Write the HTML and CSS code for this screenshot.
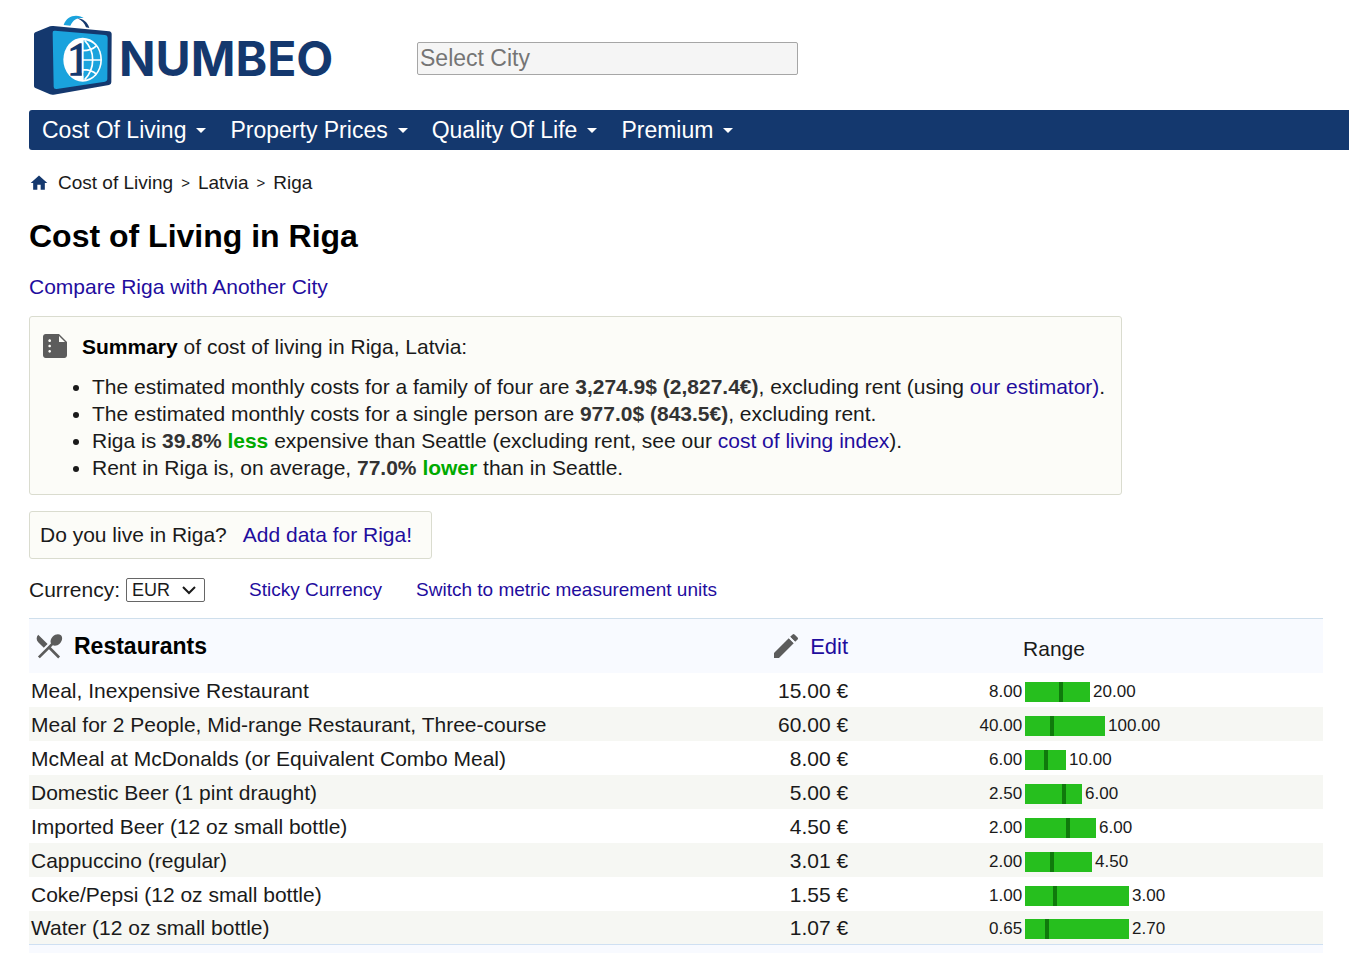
FILE: index.html
```html
<!DOCTYPE html>
<html lang="en">
<head>
  <meta charset="utf-8" />
  <title>Cost of Living in Riga</title>
  <meta name="viewport" content="width=device-width, initial-scale=1" />
  <link rel="stylesheet" href="styles.css">
</head>

<body>
  <header class="top">
    <a href="#" class="logo">
      <svg class="logo-mark" viewBox="42 30 240 240" aria-hidden="true">
        <path fill="#1aa3dd" d="M131 60C137 41 152 32 168 32C178 32 186 35 191 39C174 38 160 42 151 62Z" />
        <path fill="#14386e" d="M172 40C188 41 203 51 208 69L198 67C194 55 186 46 172 40Z" />
        <path fill="#14386e" d="M42 88Q42 84 46 82L90 64Q95 62 100 63L267 79Q275 80 275 88L274 232Q274 239 267 240L101 269Q95 270 90 268L46 249Q42 247 42 243Z" />
        <path fill="#1aa3dd" d="M98 84Q97 76 105 77L255 90Q263 91 263 98L262 223Q262 229 255 230L110 252Q101 253 101 245Z" />
        <ellipse cx="188" cy="164" rx="58" ry="66" fill="#fff" />
        <text class="logo-one" x="141" y="211">1</text>
        <path fill="#1aa3dd" d="M190 106C222 107 241 132 241 164C241 197 220 223 190 224Z" />
        <g fill="none" stroke="#fff" stroke-width="5">
          <path d="M188 165H243M188 137Q215 137 230 122M188 194Q215 194 230 208M194 106Q219 132 218 165Q218 199 194 224M188 104V226" />
        </g>
      </svg>
      <span class="logo-name">NUMBEO</span>
    </a>
    <form class="search">
      <input type="text" name="city" placeholder="Select City" aria-label="Select City" />
    </form>
  </header>

  <nav class="menu">
    <a href="#">Cost Of Living<span class="caret"></span></a>
    <a href="#">Property Prices<span class="caret"></span></a>
    <a href="#">Quality Of Life<span class="caret"></span></a>
    <a href="#">Premium<span class="caret"></span></a>
  </nav>

  <main>
    <div class="breadcrumb">
      <a href="#" aria-label="Home"><svg class="home" viewBox="0 0 24 24"><path d="M10 20v-6h4v6h5v-8h3L12 3 2 12h3v8z" /></svg></a>
      <a href="#">Cost of Living</a>
      <span class="sep">&gt;</span>
      <a href="#">Latvia</a>
      <span class="sep">&gt;</span>
      <a href="#">Riga</a>
    </div>

    <h1>Cost of Living in Riga</h1>
    <p class="compare"><a href="#">Compare Riga with Another City</a></p>

    <section class="box summary">
      <div class="summary-title">
        <svg class="icon" viewBox="0 0 24 24"><path fill-rule="evenodd" d="M15 3H5c-1.100 0-2 .9-2 2v14c0 1.100.9 2 2 2h14c1.100 0 2-.9 2-2V9l-6-6zM8 17c-.55 0-1-.45-1-1s.45-1 1-1 1 .45 1 1-.45 1-1 1zm0-4c-.55 0-1-.45-1-1s.45-1 1-1 1 .45 1 1-.45 1-1 1zm0-4c-.55 0-1-.45-1-1s.45-1 1-1 1 .45 1 1-.45 1-1 1zm7 0V4.500L19.500 9H15z" /></svg>
        <span><b>Summary</b> of cost of living in Riga, Latvia:</span>
      </div>
      <ul>
        <li>The estimated monthly costs for a family of four are <b>3,274.9$ (2,827.4€)</b>, excluding rent (using <a href="#">our estimator)</a>.</li>
        <li>The estimated monthly costs for a single person are <b>977.0$ (843.5€)</b>, excluding rent.</li>
        <li>Riga is <b>39.8% <span class="green">less</span></b> expensive than Seattle (excluding rent, see our <a href="#">cost of living index</a>).</li>
        <li>Rent in Riga is, on average, <b>77.0% <span class="green">lower</span></b> than in Seattle.</li>
      </ul>
    </section>

    <div class="box add-data">
      <span>Do you live in Riga?</span>
      <a href="#">Add data for Riga!</a>
    </div>

    <form class="currency">
      <label for="currency">Currency:</label>
      <span class="select">
        <select id="currency">
          <option>EUR</option>
          <option>USD</option>
        </select>
        <svg viewBox="0 0 16 10"><path d="M2 2l6 6 6-6" /></svg>
      </span>
      <a href="#" class="sticky">Sticky Currency</a>
      <a href="#" class="units">Switch to metric measurement units</a>
    </form>

    <table class="prices">
      <colgroup>
        <col class="col-name">
        <col class="col-price">
        <col class="col-range">
      </colgroup>
      <thead>
        <tr>
          <th class="category">
            <div>
              <svg class="icon" viewBox="0 0 24 24"><path d="M8.100 13.340l2.830-2.830L3.910 3.500c-1.560 1.560-1.560 4.090 0 5.660l4.190 4.180zm6.780-1.810c1.530.71 3.680.21 5.270-1.380 1.910-1.910 2.280-4.650.81-6.120-1.460-1.460-4.200-1.100-6.120.81-1.590 1.590-2.090 3.740-1.380 5.270L3.700 19.870l1.410 1.410L12 14.410l6.880 6.880 1.410-1.410L13.410 13l1.470-1.470z" /></svg>
              <span>Restaurants</span>
            </div>
          </th>
          <th class="edit">
            <a href="#"><svg class="icon" viewBox="0 0 24 24"><path d="M3 17.250V21h3.750L17.810 9.940l-3.750-3.750L3 17.250zM20.710 7.040a1 1 0 0 0 0-1.410l-2.340-2.340a1 1 0 0 0-1.410 0l-1.830 1.830 3.750 3.750 1.830-1.830z" /><path class="cut" d="M14.500 5.500l4.200 4.200" /></svg><span>Edit</span></a>
          </th>
          <th class="range-title">Range</th>
        </tr>
      </thead>
      <tbody>
        <tr>
          <td>Meal, Inexpensive Restaurant</td>
          <td class="price">15.00 €</td>
          <td><div class="range"><span class="low">8.00</span><span class="bar" style="width: 65px"><i style="margin-left: 34px"></i></span><span>20.00</span></div></td>
        </tr>
        <tr>
          <td>Meal for 2 People, Mid-range Restaurant, Three-course</td>
          <td class="price">60.00 €</td>
          <td><div class="range"><span class="low">40.00</span><span class="bar" style="width: 80px"><i style="margin-left: 25px"></i></span><span>100.00</span></div></td>
        </tr>
        <tr>
          <td>McMeal at McDonalds (or Equivalent Combo Meal)</td>
          <td class="price">8.00 €</td>
          <td><div class="range"><span class="low">6.00</span><span class="bar" style="width: 41px"><i style="margin-left: 19px"></i></span><span>10.00</span></div></td>
        </tr>
        <tr>
          <td>Domestic Beer (1 pint draught)</td>
          <td class="price">5.00 €</td>
          <td><div class="range"><span class="low">2.50</span><span class="bar" style="width: 57px"><i style="margin-left: 37px"></i></span><span>6.00</span></div></td>
        </tr>
        <tr>
          <td>Imported Beer (12 oz small bottle)</td>
          <td class="price">4.50 €</td>
          <td><div class="range"><span class="low">2.00</span><span class="bar" style="width: 71px"><i style="margin-left: 41px"></i></span><span>6.00</span></div></td>
        </tr>
        <tr>
          <td>Cappuccino (regular)</td>
          <td class="price">3.01 €</td>
          <td><div class="range"><span class="low">2.00</span><span class="bar" style="width: 67px"><i style="margin-left: 25px"></i></span><span>4.50</span></div></td>
        </tr>
        <tr>
          <td>Coke/Pepsi (12 oz small bottle)</td>
          <td class="price">1.55 €</td>
          <td><div class="range"><span class="low">1.00</span><span class="bar" style="width: 104px"><i style="margin-left: 28px"></i></span><span>3.00</span></div></td>
        </tr>
        <tr>
          <td>Water (12 oz small bottle)</td>
          <td class="price">1.07 €</td>
          <td><div class="range"><span class="low">0.65</span><span class="bar" style="width: 104px"><i style="margin-left: 20px"></i></span><span>2.70</span></div></td>
        </tr>
      </tbody>
    </table>
    <div class="table-end"></div>
  </main>
</body>
</html>
```
FILE: styles.css
```css
* {
  box-sizing: border-box;
}

body {
  margin: 0;
  padding-left: 29px;
  font-family: "Liberation Sans", Arial, sans-serif;
  font-size: 21px;
  line-height: 27px;
  color: #1a1a1a;
  background-color: #fff;
}

a {
  color: #1f0d9e;
  text-decoration: none;
}

a:hover {
  text-decoration: underline;
}

/* header */
.top {
  display: flex;
  align-items: center;
  height: 110px;
  padding-left: 5px;
}

.logo {
  display: flex;
  align-items: center;
  width: 383px;
  color: #14386e;
}

.logo-mark {
  width: 80px;
  height: 80px;
}

.logo-one {
  font-family: "Liberation Serif", serif;
  font-size: 138px;
  fill: #14386e;
  stroke: #14386e;
  stroke-width: 4px;
}

.logo-name {
  margin-left: 5px;
  padding-top: 8px;
  font-family: Inter, sans-serif;
  font-size: 48px;
  font-weight: 700;
  line-height: 60px;
}

.search {
  margin: 7px 0 0;
}

.search input {
  display: block;
  width: 381px;
  height: 33px;
  padding: 0 2px;
  border: 1px solid #a6a6a6;
  border-radius: 2px;
  background-color: #f5f5f5;
  font-family: inherit;
  font-size: 23px;
}

/* menu */
.menu {
  display: flex;
  height: 40px;
  background-color: #14386e;
  border-radius: 3px 0 0 3px;
}

.menu a {
  display: flex;
  align-items: center;
  padding: 0 11px 0 13px;
  font-size: 23px;
  color: #fff;
}

.caret {
  margin-left: 10px;
  border: 5px solid transparent;
  border-top-color: #fff;
  border-bottom: 0;
}

main {
  padding-right: 26px;
}

/* breadcrumb */
.breadcrumb {
  display: flex;
  align-items: center;
  margin-top: 19px;
  font-size: 19px;
}

.breadcrumb a {
  color: #1a1a1a;
}

.home {
  display: block;
  width: 20px;
  height: 20px;
  margin-right: 9px;
  fill: #14386e;
}

.sep {
  margin: 0 8px;
  font-size: 15px;
}

h1 {
  margin: 20px 0 0;
  font-size: 32px;
  line-height: 40px;
  color: #000;
}

.compare {
  margin: 17px 0 16px;
}

/* boxes */
.box {
  width: fit-content;
  border: 1px solid #dadccf;
  border-radius: 3px;
  background-color: #fcfcf8;
}

.summary {
  padding: 13px 16px 13px 9px;
}

.summary-title {
  display: flex;
  align-items: center;
}

.summary-title b {
  color: #000;
}

.icon {
  width: 32px;
  height: 32px;
  fill: #5c5c5c;
}

.summary-title .icon {
  margin-right: 11px;
}

.summary ul {
  margin: 11px 0 0;
  padding-left: 53px;
}

.summary li b {
  color: #333;
}

.summary .green {
  color: #0a0;
}

.add-data {
  display: flex;
  gap: 16px;
  margin-top: 16px;
  padding: 9px 19px 10px 10px;
}

/* currency */
.currency {
  display: flex;
  align-items: center;
  margin: 17px 0 15px;
  font-size: 19px;
}

.currency label {
  font-size: 21px;
}

.select {
  position: relative;
  margin-left: 6px;
}

.select select {
  display: block;
  width: 79px;
  height: 24px;
  padding: 0 5px;
  appearance: none;
  border: 1px solid #666;
  border-radius: 2px;
  background-color: #fff;
  font-family: inherit;
  font-size: 18px;
  color: #1a1a1a;
}

.select svg {
  position: absolute;
  top: 7px;
  right: 8px;
  width: 16px;
  height: 10px;
  fill: none;
  stroke: #1a1a1a;
  stroke-width: 2px;
  pointer-events: none;
}

.sticky {
  margin-left: 44px;
}

.units {
  margin-left: 34px;
}

/* prices */
.prices {
  width: 100%;
  table-layout: fixed;
  border-collapse: collapse;
  border-top: 1px solid #cfdfec;
  border-bottom: 1px solid #cfe0f2;
}

.col-name {
  width: 50%;
}

.col-price {
  width: 13.3%;
}

.prices th {
  height: 54px;
  padding: 0;
  background-color: #f8faff;
  font-weight: normal;
  text-align: left;
}

.prices .category {
  padding-left: 4px;
  font-size: 23px;
  font-weight: bold;
  color: #000;
}

.category div {
  display: flex;
  align-items: center;
  gap: 9px;
}

.edit a {
  display: flex;
  align-items: center;
  justify-content: flex-end;
  gap: 8px;
  font-size: 22px;
}

.category span,
.edit span {
  padding-top: 2px;
}

.edit .cut {
  stroke: #f8faff;
  stroke-width: 1px;
}

.prices .range-title {
  padding: 6px 0 0 175px;
}

.prices td {
  height: 34px;
  padding: 1px 0 0 2px;
}

.prices tbody tr:nth-child(even) {
  background-color: #f6f7f3;
}

.prices .price {
  text-align: right;
}

.range {
  display: flex;
  align-items: center;
  gap: 3px;
  padding-top: 3px;
  font-size: 17px;
  line-height: 20px;
}

.low {
  width: 172px;
  text-align: right;
}

.bar {
  height: 20px;
  background-color: #26bf1e;
}

.bar i {
  display: block;
  width: 4px;
  height: 20px;
  background-color: #0f7a0c;
}

.table-end {
  height: 8px;
  background-color: #f8faff;
}
```
